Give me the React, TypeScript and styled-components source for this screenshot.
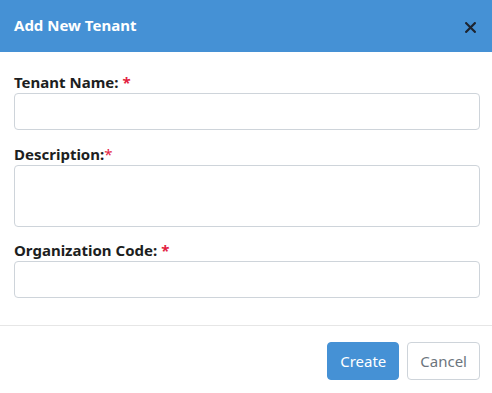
import React from 'react'
import styled, {createGlobalStyle} from 'styled-components'

const Global = createGlobalStyle`
    html, body {
        margin: 0;
        padding: 0;
        background: #fff;
        font-family: "Noto Sans", "Open Sans", sans-serif;
    }
`

const Modal = styled.div`
    display: flex;
    flex-direction: column;
    width: 492px;
    height: 393px;
    background: #fff;
    overflow: hidden;
`

const Header = styled.div`
    display: flex;
    align-items: center;
    justify-content: space-between;
    height: 52px;
    padding: 0 14px;
    box-sizing: border-box;
    background: #4591d5;
`

const Title = styled.div`
    color: #fff;
    font-size: 15px;
    font-weight: 700;
    margin-top: -3px;
`

const Close = styled.button`
    display: flex;
    align-items: center;
    justify-content: center;
    border: none;
    background: none;
    padding: 0;
    margin-right: 2px;
    margin-top: 3px;
    cursor: pointer;
`

const Body = styled.div`
    display: flex;
    flex-direction: column;
    padding: 20px 12px 27px 14px;
    border-bottom: 1px solid #e6e6e6;
`

const Field = styled.div<{gap?: number}>`
    display: flex;
    flex-direction: column;
    margin-bottom: ${p => p.gap ?? 0}px;
`

const Label = styled.label`
    height: 20px;
    line-height: 20px;
    margin-bottom: 1px;
    font-size: 15px;
    font-weight: 700;
    color: #1c1e21;
`

const Star = styled.span<{tight?: boolean}>`
    color: #e3223f;
    margin-left: ${p => p.tight ? 0 : 4}px;
    font-weight: ${p => p.tight ? 400 : 700};
`

const Input = styled.input`
    height: 37px;
    box-sizing: border-box;
    border: 1px solid #ced4da;
    border-radius: 4px;
    padding: 6px 12px;
    font-size: 14px;
    outline: none;
`

const TextArea = styled.textarea`
    height: 62px;
    box-sizing: border-box;
    border: 1px solid #ced4da;
    border-radius: 4px;
    padding: 6px 12px;
    font-size: 14px;
    resize: none;
    outline: none;
    font-family: inherit;
`

const Footer = styled.div`
    display: flex;
    justify-content: flex-end;
    gap: 8px;
    padding: 16px 12px 0 0;
`

const Button = styled.button<{primary?: boolean}>`
    height: 38px;
    padding: 0 12px;
    border-radius: 4px;
    font-family: inherit;
    font-size: 15px;
    border: 1px solid ${p => p.primary ? '#4591d5' : '#ced4da'};
    background: ${p => p.primary ? '#4591d5' : '#fff'};
    color: ${p => p.primary ? '#fff' : '#6c757d'};
    cursor: pointer;
`

export default function App() {
    return <Modal>
        <Global/>
        <Header>
            <Title>Add New Tenant</Title>
            <Close aria-label="close">
                <svg width="11" height="11" viewBox="0 0 11 11">
                    <path d="M1.2 1.2 L9.8 9.8 M9.8 1.2 L1.2 9.8" stroke="#1d2430" strokeWidth="2.2" strokeLinecap="square"/>
                </svg>
            </Close>
        </Header>
        <Body>
            <Field gap={14}>
                <Label>Tenant Name:<Star>*</Star></Label>
                <Input/>
            </Field>
            <Field gap={13}>
                <Label>Description:<Star tight>*</Star></Label>
                <TextArea/>
            </Field>
            <Field>
                <Label>Organization Code:<Star>*</Star></Label>
                <Input/>
            </Field>
        </Body>
        <Footer>
            <Button primary>Create</Button>
            <Button>Cancel</Button>
        </Footer>
    </Modal>
}
